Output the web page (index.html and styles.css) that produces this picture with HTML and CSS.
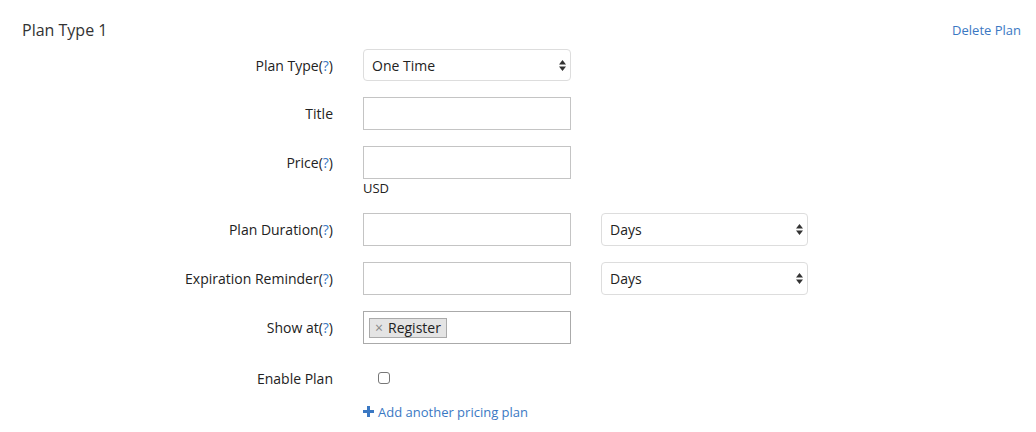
FILE: index.html
```html
<!DOCTYPE html>
<html>
  <head>
    <title>Pricing Plan</title>
    <link rel="stylesheet" href="styles.css">
  </head>
  <body>
    <div class="plan">
      <div class="plan-header">
        <h3 class="plan-title">Plan Type 1</h3>
        <a class="link delete-link" href="#">Delete Plan</a>
      </div>

      <div class="form-row">
        <label class="form-label">Plan Type<span class="help">(<a href="#">?</a>)</span></label>
        <div class="select-wrap">
          <select class="select"><option>One Time</option></select>
          <svg class="arrows" width="7" height="11" viewBox="0 0 7 11"><path d="M3.5 0L7 4.5H0z M3.5 11L0 6.5H7z" fill="#333"/></svg>
        </div>
      </div>

      <div class="form-row">
        <label class="form-label">Title</label>
        <input class="input" type="text">
      </div>

      <div class="form-row with-note">
        <label class="form-label">Price<span class="help">(<a href="#">?</a>)</span></label>
        <div class="field">
          <input class="input" type="text">
          <div class="note">USD</div>
        </div>
      </div>

      <div class="form-row">
        <label class="form-label">Plan Duration<span class="help">(<a href="#">?</a>)</span></label>
        <input class="input" type="text">
        <div class="select-wrap">
          <select class="select"><option>Days</option></select>
          <svg class="arrows" width="7" height="11" viewBox="0 0 7 11"><path d="M3.5 0L7 4.5H0z M3.5 11L0 6.5H7z" fill="#333"/></svg>
        </div>
      </div>

      <div class="form-row">
        <label class="form-label">Expiration Reminder<span class="help">(<a href="#">?</a>)</span></label>
        <input class="input" type="text">
        <div class="select-wrap">
          <select class="select"><option>Days</option></select>
          <svg class="arrows" width="7" height="11" viewBox="0 0 7 11"><path d="M3.5 0L7 4.5H0z M3.5 11L0 6.5H7z" fill="#333"/></svg>
        </div>
      </div>

      <div class="form-row">
        <label class="form-label">Show at<span class="help">(<a href="#">?</a>)</span></label>
        <div class="tags">
          <span class="tag"><span class="tag-x">×</span>Register</span>
        </div>
      </div>

      <div class="form-row check-row">
        <label class="form-label">Enable Plan</label>
        <span class="checkbox"></span>
      </div>

      <div class="add-row">
        <a class="link add-link" href="#">
          <svg width="11" height="11" viewBox="0 0 11 11"><path d="M4 0H7V4H11V7H7V11H4V7H0V4H4z" fill="#3a78c3"/></svg>
          Add another pricing plan
        </a>
      </div>
    </div>
  </body>
</html>
```

FILE: styles.css
```css
body {
  margin: 0;
  background: #fff;
  font-family: "Open Sans", "DejaVu Sans", sans-serif;
  color: #222;
}

.plan {
  padding: 0 15px 0 22px;
}

.link {
  color: #3a78c3;
  text-decoration: none;
}

/* Header */
.plan-header {
  box-sizing: border-box;
  display: flex;
  justify-content: space-between;
  align-items: center;
  height: 49px;
  padding-top: 11px;
}

.plan-title {
  margin: 0;
  font-size: 16px;
  font-weight: normal;
  color: #333;
}

.delete-link {
  font-size: 13px;
}

/* Rows */
.form-row {
  display: flex;
  align-items: center;
  gap: 30px;
  margin-bottom: 16px;
}

.with-note {
  align-items: flex-start;
}

.with-note .form-label {
  line-height: 33px;
}

.form-label {
  width: 311px;
  text-align: right;
  font-size: 14px;
}

.help a {
  color: #3a78c3;
  text-decoration: none;
}

.input {
  display: block;
  box-sizing: border-box;
  width: 208px;
  height: 33px;
  margin: 0;
  border: 1px solid #c4c4c4;
  border-radius: 0;
  font-family: inherit;
  font-size: 14px;
}

.note {
  font-size: 13px;
  line-height: 17px;
  margin-top: 1px;
}

/* Selects */
.select-wrap {
  position: relative;
}

.select {
  display: block;
  box-sizing: border-box;
  width: 208px;
  height: 32px;
  padding: 0 20px 0 8px;
  border: 1px solid #ddd;
  border-radius: 4px;
  background: #fff;
  font-family: inherit;
  font-size: 14px;
  color: #222;
  -webkit-appearance: none;
  appearance: none;
}

.form-row .input + .select-wrap .select {
  width: 207px;
  height: 33px;
}

.arrows {
  position: absolute;
  right: 5px;
  top: 11px;
  pointer-events: none;
}

/* Tag box */
.tags {
  box-sizing: border-box;
  width: 208px;
  height: 33px;
  padding: 4px 5px;
  border: 1px solid #aaa;
}

.tag {
  box-sizing: border-box;
  display: inline-flex;
  align-items: center;
  height: 20px;
  padding: 0 5px;
  border: 1px solid #aaa;
  background: #e4e4e4;
  font-size: 14px;
  line-height: 18px;
  color: #222;
}

.tag-x {
  color: #888;
  font-size: 14px;
  margin-right: 5px;
}

/* Checkbox */
.check-row {
  height: 36px;
  margin-bottom: 0;
}

.checkbox {
  box-sizing: border-box;
  width: 12px;
  height: 12px;
  margin-left: 15px;
  border: 1px solid #777;
  border-radius: 3px;
}

.add-row {
  padding-left: 341px;
  margin-top: 4px;
}

.add-link {
  display: inline-flex;
  align-items: center;
  gap: 4px;
  font-size: 13px;
  line-height: 18px;
}
```
